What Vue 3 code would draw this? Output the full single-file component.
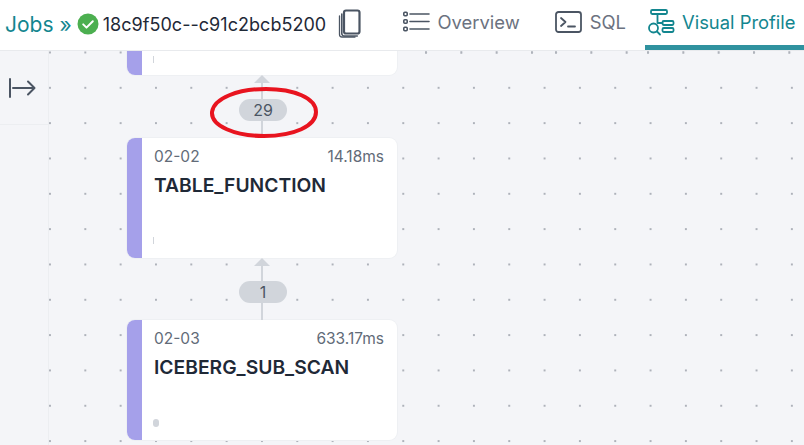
<script setup>
const nodes = [
  { id: '02-02', time: '14.18ms', name: 'TABLE_FUNCTION', count: 29, wide: false },
  { id: '02-03', time: '633.17ms', name: 'ICEBERG_SUB_SCAN', count: 1, wide: true },
]
</script>

<template>
  <div class="page">
    <header class="topbar">
      <div class="crumbs">
        <span class="jobs">Jobs »</span>
        <svg class="check" width="22" height="22" viewBox="0 0 22 22">
          <circle cx="11" cy="11" r="10.5" fill="#4caf50" />
          <path d="M6.2 11.4l3.3 3.2 6.3-6.4" fill="none" stroke="#fff" stroke-width="2" stroke-linecap="round" stroke-linejoin="round" />
        </svg>
        <span class="job-id">18c9f50c--c91c2bcb5200</span>
        <svg class="copy" width="24" height="30" viewBox="0 0 24 30" fill="none" stroke="#4b5563">
          <rect x="6" y="1.5" width="15.5" height="23" rx="2" stroke-width="2.2" />
          <path d="M3.8 5v19.5a2.5 2.5 0 0 0 2.5 2.5h13" stroke-width="1.6" stroke-linecap="round" />
          <path d="M1.5 7v18.5a2.5 2.5 0 0 0 2.5 2.5h13" stroke-width="1.3" stroke-linecap="round" />
        </svg>
      </div>
      <nav class="tabs">
        <a class="tab tab-overview">
          <svg width="27" height="24" viewBox="0 0 27 24" fill="none" stroke="#4b5563">
            <rect x="0.8" y="2.3" width="3.4" height="3.4" rx="1" stroke-width="1.6" />
            <rect x="0.8" y="9.8" width="3.4" height="3.4" rx="1" stroke-width="1.6" />
            <rect x="0.8" y="17.3" width="3.4" height="3.4" rx="1" stroke-width="1.6" />
            <path d="M7 4h19M7 11.5h19M7 19h19" stroke-width="1.6" stroke-linecap="round" />
          </svg>
          Overview
        </a>
        <a class="tab tab-sql">
          <svg width="27" height="22" viewBox="0 0 27 22" fill="none" stroke="#4b5563" stroke-width="1.8" stroke-linecap="round" stroke-linejoin="round">
            <rect x="1" y="1" width="25" height="20" rx="2.5" />
            <path d="M6 7l4.5 4L6 15M13 15.5h7" />
          </svg>
          SQL
        </a>
        <a class="tab active">
          <svg width="28" height="28" viewBox="0 0 28 28" fill="none" stroke="#13868f" stroke-width="1.8" stroke-linecap="round" stroke-linejoin="round">
            <rect x="4" y="2" width="16" height="4" rx="1.2" />
            <rect x="15.5" y="13" width="11" height="4" rx="1.2" />
            <rect x="15.5" y="20" width="11" height="4" rx="1.2" />
            <path d="M10.5 6v9h5" />
            <circle cx="6.5" cy="20" r="4.5" />
            <path d="M10 23.5l3 3" />
          </svg>
          Visual Profile
        </a>
      </nav>
    </header>

    <main class="body">
      <aside class="sidebar">
        <div class="toggle">
          <svg width="28" height="20" viewBox="0 0 28 20" fill="none" stroke="#4b5563" stroke-width="2" stroke-linecap="round" stroke-linejoin="round">
            <path d="M2 1v18M5 10h21M20 3.5l6.5 6.5-6.5 6.5" />
          </svg>
        </div>
      </aside>

      <section class="canvas">
        <div class="seam">
          <span class="seam-a"></span>
          <span class="seam-b"></span>
          <span class="seam-c"></span>
        </div>

        <div class="graph">
          <div class="card card-clipped">
            <div class="accent"></div>
            <div class="card-body"><i class="tick"></i></div>
          </div>

          <template v-for="n in nodes" :key="n.id">
            <div class="link" :class="{ 'link-first': !n.wide }">
              <span class="arrow"></span>
              <span class="line"></span>
              <span class="pill">{{ n.count }}</span>
            </div>
            <div class="card">
              <div class="accent"></div>
              <div class="card-body">
                <div class="row">
                  <span>{{ n.id }}</span>
                  <span>{{ n.time }}</span>
                </div>
                <div class="name">{{ n.name }}</div>
                <i class="tick" :class="{ 'tick-wide': n.wide }"></i>
              </div>
            </div>
          </template>
        </div>

        <svg class="circle-mark" width="112" height="56" viewBox="0 0 112 56" fill="none">
          <path d="M4 27C6 13 30 4 58 4c28 0 50 9 50 23 0 14-22 24-52 24C27 51 3 41 4 27z" stroke="#e8141f" stroke-width="4" />
        </svg>
      </section>
    </main>
  </div>
</template>

<style scoped>
.page {
  width: 804px;
  height: 445px;
  overflow: hidden;
  display: flex;
  flex-direction: column;
  font-family: Inter, "Liberation Sans", sans-serif;
  background: #f4f5f8;
}

.topbar {
  height: 50px;
  flex: none;
  display: flex;
  justify-content: space-between;
  background: #fff;
  border-bottom: 1px solid #e8eaed;
}

.crumbs {
  display: flex;
  align-items: center;
  padding: 0 0 2px 5px;
}

.jobs {
  font-size: 21px;
  color: #13868f;
}

.check {
  margin: 0 4px 0 5px;
}

.job-id {
  font-size: 18px;
  letter-spacing: 0.04px;
  color: #1f2937;
}

.copy {
  margin-left: 12px;
}

.tabs {
  display: flex;
}

.tab {
  display: flex;
  align-items: center;
  gap: 8px;
  font-size: 18.4px;
  color: #6b7280;
  padding-bottom: 6px;
  box-sizing: border-box;
  height: 50px;
}

.tab-overview {
  margin-right: 35px;
}

.tab-sql {
  margin-right: 19px;
}

.active {
  width: 159px;
  padding-left: 2px;
  gap: 7px;
  color: #13868f;
  border-bottom: 5px solid #2f929f;
  padding-bottom: 1px;
}

.body {
  flex: 1;
  display: flex;
  min-height: 0;
}

.sidebar {
  width: 49px;
  flex: none;
  box-sizing: border-box;
  border-right: 1px solid #eceef1;
}

.toggle {
  height: 74px;
  box-sizing: border-box;
  padding: 27px 0 0 8px;
  border-bottom: 1px solid #eceef1;
}

.canvas {
  flex: 1;
  position: relative;
  overflow: hidden;
  background-image: radial-gradient(circle at 1px 1px, #aeb2ba 1px, transparent 1.5px);
  background-size: 35.33px 35.33px;
  background-position: 0 0.5px;
}

.seam {
  position: absolute;
  top: 0;
  left: 349px;
  right: 0;
  height: 3px;
  display: flex;
}

.seam span {
  display: block;
  height: 3px;
  background-color: #f4f5f8;
  background-image: radial-gradient(circle at 1px 1.5px, #aeb2ba 1px, transparent 1.5px);
  background-size: 35.33px 3px;
  background-repeat: repeat-x;
}

.seam-a {
  width: 152px;
  background-position: 27px 0;
}

.seam-b {
  width: 90px;
  background-position: 5px 0;
}

.seam-c {
  flex: 1;
  background-position: 7px 0;
}

.graph {
  width: 270px;
  margin-left: 78px;
  position: relative;
}

.card {
  height: 120px;
  display: flex;
  box-sizing: border-box;
  background: #fff;
  border-radius: 8px;
  overflow: hidden;
  box-shadow: 0 0 0 1px #eef0f3;
}

.card-clipped {
  height: 24px;
  border-radius: 0 0 8px 8px;
}

.accent {
  width: 15px;
  flex: none;
  background: #a5a0ea;
}

.card-body {
  flex: 1;
  position: relative;
  padding: 9px 13px 0 12px;
  color: #626b78;
}

.row {
  display: flex;
  justify-content: space-between;
  font-size: 15.5px;
  line-height: 19px;
}

.name {
  margin-top: 9px;
  font-size: 19.3px;
  line-height: 20px;
  font-weight: 600;
  color: #1f2937;
}

.tick {
  position: absolute;
  left: 11px;
  bottom: 14px;
  width: 1px;
  height: 7px;
  background: #d1d5db;
}

.card-clipped .tick {
  bottom: 12px;
}

.tick-wide {
  width: 6px;
  height: 8px;
  border-radius: 3px;
  bottom: 13px;
}

.link {
  position: relative;
  height: 62px;
  box-sizing: border-box;
  padding: 23px 0 0 112px;
}

.link-first {
  height: 63px;
  padding-top: 24px;
}

.arrow {
  position: absolute;
  top: 0;
  left: 127px;
  border: 8px solid transparent;
  border-top: 0;
  border-bottom-color: #d1d5db;
}

.line {
  position: absolute;
  top: 7px;
  bottom: 0;
  left: 134px;
  width: 2px;
  background: #d1d5db;
}

.pill {
  position: relative;
  display: block;
  width: 48px;
  height: 22px;
  border-radius: 11px;
  background: #d1d5db;
  color: #4b5563;
  font-size: 16px;
  line-height: 22px;
  text-align: center;
}

.circle-mark {
  position: absolute;
  left: 159px;
  top: 34px;
}
</style>

<style>
html,
body {
  margin: 0;
  background: #f4f5f8;
}
</style>
